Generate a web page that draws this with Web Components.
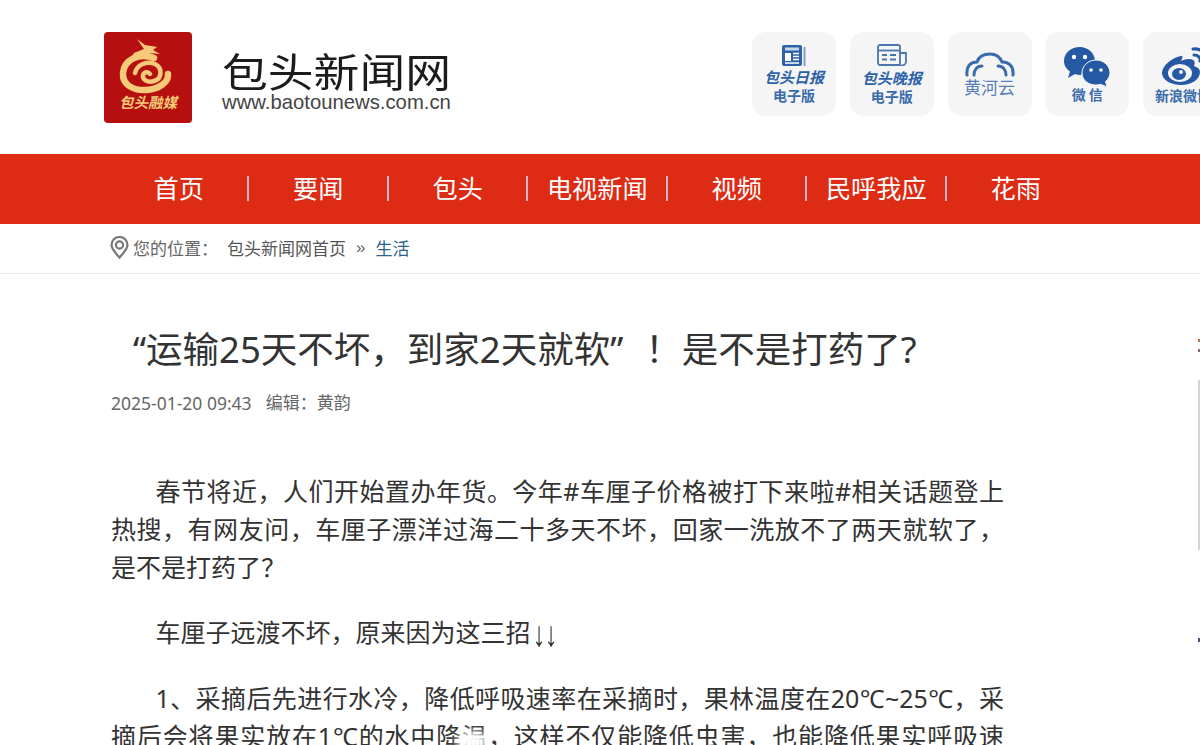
<!DOCTYPE html>
<html lang="zh-CN">
<head>
<meta charset="utf-8">
<title>运输25天不坏，到家2天就软</title>
<style>
  html, body { margin: 0; height: 745px; overflow: hidden; background: #fff; }
  body { font-family: "Noto Sans", "Noto Sans CJK SC", sans-serif; color: #333; position: relative; }
  .bang { margin-left: 22px; }
  .arrows {
    display: inline-block; font-family: "Liberation Sans", sans-serif; letter-spacing: -1px;
    transform: scale(1.05, 1.4); margin-left: 2px; text-indent: 0;
  }
</style>
</head>
<body>
<site-header></site-header>
<main-nav>
  <nav-item>首页</nav-item>
  <nav-item>要闻</nav-item>
  <nav-item>包头</nav-item>
  <nav-item>电视新闻</nav-item>
  <nav-item>视频</nav-item>
  <nav-item>民呼我应</nav-item>
  <nav-item last>花雨</nav-item>
</main-nav>
<bread-crumb></bread-crumb>
<news-article>
  <span slot="title">“运输25天不坏，到家2天就软”<span class="bang">！</span>是不是打药了?</span>
  <span slot="date">2025-01-20 09:43</span>
  <span slot="editor">编辑：黄韵</span>
  <p>春节将近，人们开始置办年货。今年#车厘子价格被打下来啦#相关话题登上热搜，有网友问，车厘子漂洋过海二十多天不坏，回家一洗放不了两天就软了，是不是打药了？</p>
  <p>车厘子远渡不坏，原来因为这三招<span class="arrows">↓↓</span></p>
  <p>1、采摘后先进行水冷，降低呼吸速率在采摘时，果林温度在20℃~25℃，采摘后会将果实放在1℃的水中降温，这样不仅能降低虫害，也能降低果实呼吸速率。</p>
</news-article>
<side-scraps></side-scraps>

<script>
class AppTile extends HTMLElement {
  constructor() {
    super();
    this.attachShadow({ mode: "open" });
    this.shadowRoot.innerHTML = `
      <style>
        :host {
          display: flex; flex: none; flex-direction: column; align-items: center;
          width: 84px; height: 84px; border-radius: 14px; background: #f5f5f6;
          color: #2d62a8; box-sizing: border-box; padding-top: var(--top, 12px);
          white-space: nowrap;
        }
        ::slotted(svg) { display: block; flex: none; }
        ::slotted(.hand) {
          font: italic 700 15px/17px "Noto Sans CJK SC", sans-serif;
          margin-top: 2px; color: #2d62a8;
        }
        ::slotted(.sub) {
          font: 700 14px/18px "Noto Sans CJK SC", sans-serif; margin-top: 1px; color: #3a6cab;
        }
        ::slotted(.thin) {
          font: 400 17px/20px "Noto Sans CJK SC", sans-serif; color: #5580b8;
        }
      </style>
      <slot></slot>`;
  }
}
customElements.define("app-tile", AppTile);

class LogoMark extends HTMLElement {
  constructor() {
    super();
    this.attachShadow({ mode: "open" });
    this.shadowRoot.innerHTML = `
      <style>
        :host { display: block; flex: none; width: 88px; height: 91px; }
        svg { display: block; }
      </style>
      <svg width="88" height="91" viewBox="0 0 88 91">
        <rect x="0" y="0" width="88" height="91" rx="4" fill="#b5100f"/>
        <g fill="none" stroke="#f5ca78" stroke-linecap="round">
          <path d="M50 26C35 20 20 28 19 41C18 53 30 59 43 58C55 57 65 50 64 42" stroke-width="6.500"/>
          <path d="M31 41C33 32 43 29 51 32C59 36 58 47 50 49C44 51 38 48 39 43C40 40 44 39 46 42" stroke-width="4.500"/>
        </g>
        <path d="M33 7L41 13L53 15L49 18L56 22L45 21L32 27L24 31L30 21L40 17Z" fill="#f5ca78"/>
        <text x="44" y="76" text-anchor="middle" font-family="Noto Sans CJK SC" font-style="italic" font-weight="700" font-size="14.500" fill="#f5ca78">包头融媒</text>
      </svg>`;
  }
}
customElements.define("logo-mark", LogoMark);

class SiteHeader extends HTMLElement {
  constructor() {
    super();
    this.attachShadow({ mode: "open" });
    this.shadowRoot.innerHTML = `
      <style>
        :host {
          display: flex; align-items: flex-start; height: 154px; box-sizing: border-box;
          padding: 32px 0 0 104px; overflow: hidden; background: #fff;
        }
        .brand { margin-left: 30px; flex: none; width: 229px; padding-top: 15px; }
        .name {
          font: 400 45.8px/44px "Noto Sans CJK SC", sans-serif; color: #1c1c1c; white-space: nowrap;
          transform: scaleY(.88);
        }
        .url {
          font: 400 20.3px/22px "Liberation Sans", sans-serif; color: #444; white-space: nowrap;
        }
        .tiles { display: flex; flex: none; gap: 13.75px; margin-left: 301px; }
      </style>
      <logo-mark></logo-mark>
      <div class="brand">
        <div class="name">包头新闻网</div>
        <div class="url">www.baotounews.com.cn</div>
      </div>
      <div class="tiles">
        <app-tile style="--top:13px">
          <svg width="24" height="21" viewBox="0 0 24 21">
            <rect x="0" y="0" width="20" height="21" rx="2" fill="#2d62a8"/>
            <rect x="21.5" y="2" width="2" height="19" fill="#7e9fc9"/>
            <rect x="3" y="2.5" width="14" height="3" fill="#c9d8ec"/>
            <rect x="3" y="8" width="6" height="8" fill="#fff"/>
            <path d="M11 8.500H17M11 11.500H17M11 14.500H17M3 18H17" stroke="#fff" stroke-width="1.400"/>
          </svg>
          <span class="hand">包头日报</span>
          <span class="sub">电子版</span>
        </app-tile>
        <app-tile style="--top:12px">
          <svg width="30" height="22" viewBox="0 0 30 22" fill="none" stroke="#4a76b0" stroke-width="1.800">
            <path d="M23 21H3A2 2 0 0 1 1 19V3A2 2 0 0 1 3 1H21A2 2 0 0 1 23 3V21A4 4 0 0 0 29 18V9H23"/>
            <path d="M1 6.500H23"/>
            <path d="M5 11H10M13 11H19M5 15.500H10M13 15.500H19" stroke-width="2"/>
          </svg>
          <span class="hand" style="margin-top:3px">包头晚报</span>
          <span class="sub">电子版</span>
        </app-tile>
        <app-tile style="--top:20px">
          <svg width="50" height="25" viewBox="0 0 50 25" fill="none" stroke="#3a6cab" stroke-width="3" stroke-linecap="round">
            <path d="M2 23C1 15 5 10 12 10C14 4 19 2 25 2C31 2 35 5 37 10C44 9.500 49 15 48 23"/>
            <path d="M9 23C9 18 12 14 17 14"/>
            <path d="M41 23C41 18 38 14 33 14"/>
          </svg>
          <span class="thin">黄河云</span>
        </app-tile>
        <app-tile style="--top:15px">
          <svg width="46" height="40" viewBox="0 0 46 40">
            <path d="M16 0C7 0 0 6 0 14C0 18.500 2.500 22 6 24.500L4 31L11 27C13 27.800 15 28 17 28C21 16 28 13 31 13C30 5 23 0 16 0Z" fill="#2559a4"/>
            <path d="M32 13C24 13 18 19 18 26C18 33 24 38 32 38C33.500 38 35 37.800 36.500 37.300L43 40L41.500 34.500C44.500 32 46 29 46 26C46 19 40 13 32 13Z" fill="#2559a4" stroke="#f5f5f6" stroke-width="1"/>
            <circle cx="10" cy="10" r="2.200" fill="#fff"/><circle cx="21" cy="10" r="2.200" fill="#fff"/>
            <circle cx="27" cy="23" r="1.800" fill="#fff"/><circle cx="37" cy="23" r="1.800" fill="#fff"/>
          </svg>
          <span class="sub" style="margin-top:-2px">微 信</span>
        </app-tile>
        <app-tile style="--top:15px">
          <svg width="50" height="39" viewBox="0 0 50 39">
            <path d="M21 9C11 11 2 19 2 26C2 33 11 38 21 38C32 38 40 32 40 25C40 21 36 20 34 19C35 16 35 14 33 13C30 11 25 12 21 14C23 10 23 8 21 9Z" fill="#2559a4"/>
            <ellipse cx="20" cy="26" rx="12" ry="9" fill="#f5f5f6"/>
            <ellipse cx="19" cy="27" rx="7" ry="6" fill="#2559a4"/>
            <circle cx="21" cy="25" r="2" fill="#f5f5f6"/>
            <path d="M33 2C41 1 47 7 45 15M34 8C38 8 41 11 40 14" fill="none" stroke="#2559a4" stroke-width="3" stroke-linecap="round"/>
          </svg>
          <span class="sub" style="margin-left:-4px;margin-top:0">新浪微博</span>
        </app-tile>
      </div>`;
  }
}
customElements.define("site-header", SiteHeader);

class MainNav extends HTMLElement {
  constructor() {
    super();
    this.attachShadow({ mode: "open" });
    this.shadowRoot.innerHTML = `
      <style>
        :host {
          display: flex; height: 70px; background: #dd2b14; padding-left: 109.5px;
          box-sizing: border-box; color: #fff;
        }
      </style>
      <slot></slot>`;
  }
}
customElements.define("main-nav", MainNav);

class NavItem extends HTMLElement {
  constructor() {
    super();
    this.attachShadow({ mode: "open" });
    this.shadowRoot.innerHTML = `
      <style>
        :host { display: flex; align-items: center; flex: none; width: 139.5px; }
        .label { flex: 1; text-align: center; font-size: 25.2px; line-height: 68px; padding: 0 0 2px 1px; white-space: nowrap; }
        i { width: 2px; height: 25px; background: #d4b3c9; margin-top: -1px; }
        :host([last]) i { visibility: hidden; }
      </style>
      <span class="label"><slot></slot></span><i></i>`;
  }
}
customElements.define("nav-item", NavItem);

class BreadCrumb extends HTMLElement {
  constructor() {
    super();
    this.attachShadow({ mode: "open" });
    this.shadowRoot.innerHTML = `
      <style>
        :host {
          display: flex; align-items: center; height: 50px; box-sizing: border-box;
          padding: 0 0 2px 110px; border-bottom: 1px solid #eeeeee;
          font-size: 17px; color: #666; white-space: nowrap;
        }
        svg { flex: none; margin-right: 4px; }
        .here { margin-right: 9px; }
        .home { color: #555; }
        .sep { margin: 0 10px; color: #666; font-family: "Liberation Sans", sans-serif; }
        .cur { color: #2b5f8c; }
      </style>
      <svg width="19" height="23" viewBox="0 0 19 23" fill="none" stroke="#777" stroke-width="2.200">
        <path d="M9.500 21.500C5 16.500 1.500 13 1.500 9A8 8 0 0 1 17.500 9C17.500 13 14 16.500 9.500 21.500Z"/>
        <circle cx="9.500" cy="9" r="3.600"/>
      </svg>
      <span class="here">您的位置：</span>
      <span class="home">包头新闻网首页</span>
      <span class="sep">»</span>
      <span class="cur">生活</span>`;
  }
}
customElements.define("bread-crumb", BreadCrumb);

class NewsArticle extends HTMLElement {
  constructor() {
    super();
    this.attachShadow({ mode: "open" });
    this.shadowRoot.innerHTML = `
      <style>
        :host { display: block; width: 893px; margin-left: 111px; padding-top: 48px; position: relative; }
        h1 {
          margin: 0; padding-left: 22px; font-weight: 400; font-size: 36.5px; line-height: 54px;
          color: #333; white-space: nowrap;
        }
        .meta { display: flex; gap: 14px; margin-top: 14px; font-size: 17.5px; line-height: 26px; color: #666; }
        ::slotted([slot="editor"]) { font-size: 17px; }
        .body { margin-top: 56px; font-size: 25px; line-height: 38px; color: #333; text-align: justify; }
        ::slotted(p) { margin: 0 0 27px; text-indent: 44.5px; }
        .smudge {
          position: absolute; left: 345px; top: 457px; width: 32px; height: 20px; border-radius: 50%;
          background: #fff; filter: blur(4px);
        }
      </style>
      <h1><slot name="title"></slot></h1>
      <div class="meta"><slot name="date"></slot><slot name="editor"></slot></div>
      <div class="body"><slot></slot></div>
      <div class="smudge"></div>`;
  }
}
customElements.define("news-article", NewsArticle);

// bits of the floating side widgets cut off at the window edge
class SideScraps extends HTMLElement {
  constructor() {
    super();
    this.attachShadow({ mode: "open" });
    this.shadowRoot.innerHTML = `
      <style>
        :host { display: block; }
        i { position: absolute; display: block; }
        .a { left: 1198px; top: 339px; width: 2px; height: 3px; background: #b9735c; }
        .b { left: 1198px; top: 349px; width: 2px; height: 3px; background: #8a6a60; }
        .c { left: 1198px; top: 380px; width: 2px; height: 170px; background: #d4d4d4; }
        .d { left: 1198px; top: 638px; width: 2px; height: 4px; background: #3b5a80; }
      </style>
      <i class="a"></i><i class="b"></i><i class="c"></i><i class="d"></i>`;
  }
}
customElements.define("side-scraps", SideScraps);
</script>
</body>
</html>
